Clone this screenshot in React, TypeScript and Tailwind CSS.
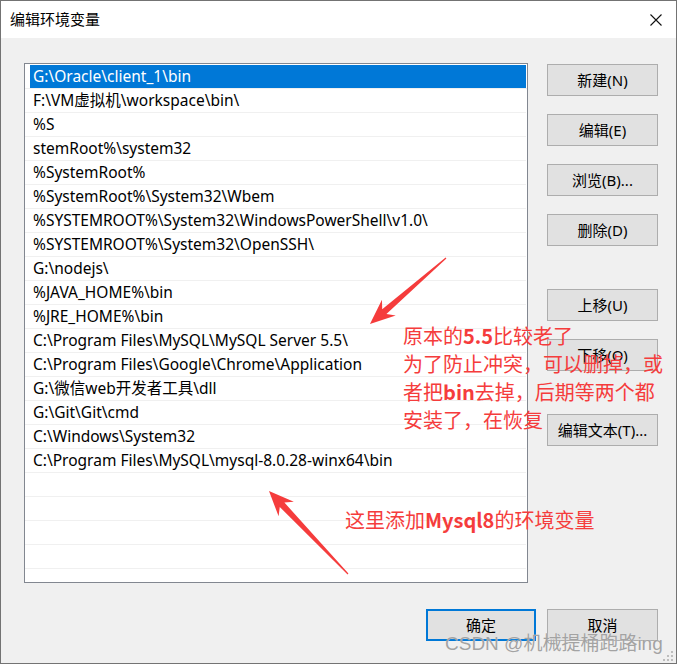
import React from "react";

const entries = [
  "G:\\Oracle\\client_1\\bin",
  "F:\\VM虚拟机\\workspace\\bin\\",
  "%S",
  "stemRoot%\\system32",
  "%SystemRoot%",
  "%SystemRoot%\\System32\\Wbem",
  "%SYSTEMROOT%\\System32\\WindowsPowerShell\\v1.0\\",
  "%SYSTEMROOT%\\System32\\OpenSSH\\",
  "G:\\nodejs\\",
  "%JAVA_HOME%\\bin",
  "%JRE_HOME%\\bin",
  "C:\\Program Files\\MySQL\\MySQL Server 5.5\\",
  "C:\\Program Files\\Google\\Chrome\\Application",
  "G:\\微信web开发者工具\\dll",
  "G:\\Git\\Git\\cmd",
  "C:\\Windows\\System32",
  "C:\\Program Files\\MySQL\\mysql-8.0.28-winx64\\bin",
  "",
  "",
  "",
  "",
];

const font = { fontFamily: '"Noto Sans", "Noto Sans CJK SC", sans-serif' };
const cjk = { fontFamily: '"Noto Sans CJK SC", sans-serif' };

function Btn({ label, className = "" }: { label: string; className?: string }) {
  return (
    <div
      className={
        "h-[32px] w-[111px] bg-[#e1e1e1] border border-[#adadad] flex items-center justify-center text-[15px] text-black " +
        className
      }
    >
      {label}
    </div>
  );
}

function Arrow({ x, y, angle, len }: { x: number; y: number; angle: number; len: number }) {
  const L = len;
  const pts = `0,-0.6 ${L - 19},-3.2 ${L - 25},-10.5 ${L},0 ${L - 25},10.5 ${L - 19},3.2 0,0.6`;
  return (
    <g transform={`translate(${x} ${y}) rotate(${angle})`}>
      <polygon points={pts} fill="#f53c3c" />
    </g>
  );
}

export default function App() {
  return (
    <div
      className="relative w-[677px] h-[664px] border border-[#737373] bg-[#f0f0f0] overflow-hidden"
      style={font}
    >
      {/* title bar */}
      <div className="h-[37px] bg-white flex items-center justify-between pl-[9px] pr-[14px]">
        <span className="text-[15px] text-black" style={cjk}>
          编辑环境变量
        </span>
        <svg width="12" height="12" viewBox="0 0 12 12">
          <path d="M0.5 0.5 L11.5 11.5 M11.5 0.5 L0.5 11.5" stroke="#111" strokeWidth="1.1" />
        </svg>
      </div>

      {/* body */}
      <div className="flex flex-col pl-[23px] pt-[25px]">
        <div className="flex gap-[19px]">
          <div className="w-[504px] h-[520px] border border-[#828790] bg-white overflow-hidden pt-[1px]">
            {entries.map((e, i) =>
              i === 0 ? (
                <div key={i} className="h-[24px] border-b border-[#f0f0f0] w-[502px]">
                  <div className="ml-[5px] w-[496px] h-full bg-[#0078d7] pl-[3px] text-white text-[15.5px] flex items-center whitespace-nowrap">
                    {e}
                  </div>
                </div>
              ) : (
                <div
                  key={i}
                  className="h-[24px] border-b border-[#f0f0f0] w-[501px] pl-[8px] text-[15.5px] text-black flex items-center whitespace-nowrap"
                >
                  {e}
                </div>
              )
            )}
          </div>
          <div className="flex flex-col pt-[1px]">
            <Btn label="新建(N)" />
            <Btn label="编辑(E)" className="mt-[18px]" />
            <Btn label="浏览(B)..." className="mt-[18px]" />
            <Btn label="删除(D)" className="mt-[18px]" />
            <Btn label="上移(U)" className="mt-[43px]" />
            <Btn label="下移(O)" className="mt-[18px]" />
            <Btn label="编辑文本(T)..." className="mt-[43px]" />
          </div>
        </div>
        <div className="mt-[26px] flex justify-end gap-[11px] pr-[18px]">
          <div className="h-[32px] w-[110px] bg-[#e1e1e1] border-2 border-[#0078d7] flex items-center justify-center text-[15px] text-black">
            确定
          </div>
          <Btn label="取消" />
        </div>
      </div>

      {/* annotations */}
      <svg className="absolute left-0 top-0 pointer-events-none" width="677" height="664">
        <Arrow x={445} y={257} angle={139.03} len={100.7} />
        <Arrow x={347} y={573} angle={-133.59} len={114.6} />
        {/* resize grip */}
        <g fill="#bdbdbd">
          <rect x="670" y="650" width="2" height="2" />
          <rect x="666" y="654" width="2" height="2" />
          <rect x="670" y="654" width="2" height="2" />
          <rect x="662" y="658" width="2" height="2" />
          <rect x="666" y="658" width="2" height="2" />
          <rect x="670" y="658" width="2" height="2" />
        </g>
      </svg>

      <div
        className="absolute left-[402px] top-[321px] text-[20px] leading-[28px] text-[#f53c3c] whitespace-nowrap"
        style={cjk}
      >
        <div>原本的<span className="font-bold">5.5</span>比较老了</div>
        <div>为了防止冲突，可以删掉，或</div>
        <div>者把<span className="font-bold">bin</span>去掉，后期等两个都</div>
        <div>安装了，在恢复</div>
      </div>

      <div
        className="absolute left-[344px] top-[505px] text-[20px] leading-[28px] text-[#f53c3c] whitespace-nowrap"
        style={cjk}
      >
        这里添加<span className="font-bold">Mysql8</span>的环境变量
      </div>

      <div
        className="absolute left-[444px] top-[630px] text-[19px] leading-[26px] text-[#a3a3a3] whitespace-nowrap"
        style={{ fontFamily: '"Liberation Sans", "Noto Sans CJK SC", sans-serif', textShadow: "0 0 1px rgba(255,255,255,0.6)" }}
      >
        CSDN @机械提桶跑路ing
      </div>
    </div>
  );
}
